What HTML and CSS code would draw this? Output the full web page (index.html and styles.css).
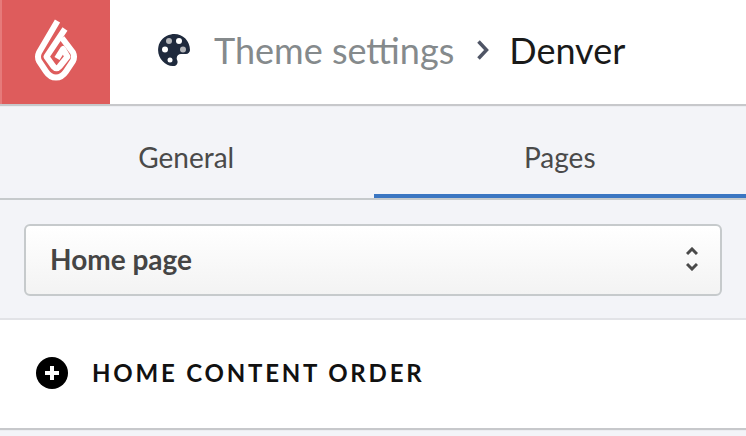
FILE: index.html
```html
<!DOCTYPE html>
<html lang="en">
<head>
    <meta charset="UTF-8">
    <meta name="viewport" content="width=device-width, initial-scale=1.0">
    <title>Theme settings</title>
    <link rel="stylesheet" href="styles.css">
</head>
<body>
    <header class="top-bar">
        <div class="logo-box">
            <svg class="logo" viewBox="0 0 44 64" width="44" height="64" fill="none" stroke="#fff" stroke-width="6" stroke-linejoin="round">
                <path d="M23.500 3 L5 34.500 Q3 38.700 5 43 L12 53.500 Q16 59.500 22 59.500 Q28 59.500 32 53.500 L39 43 Q41 38.700 39 34.500 L28 20"/>
                <path d="M31 11 L12.500 38.700 L19.500 48.500 Q22.500 52 25.500 48.500 L33.500 38.700 L29 31 L23 40.500"/>
            </svg>
        </div>
        <nav class="crumbs">
            <svg class="palette" viewBox="0 0 32 32" width="32" height="32">
                <path fill="#1f2a3d" d="M13 .4C6.500 1.500 1.500 6.500.4 12.700-1.900 24.400 8.600 33.100 16.500 31.900c2.600-.4 3.800-3.400 2.700-5.700-1.500-2.800.6-6.100 3.800-6.100h5c2.200 0 4-1.900 4-4.100C32 6 23.200-1.600 13 .4z"/>
                <circle cx="11" cy="7" r="3" fill="#b4b6ba"/>
                <circle cx="21" cy="7" r="3" fill="#fff"/>
                <circle cx="7" cy="15.500" r="3" fill="#fff"/>
                <circle cx="25" cy="15.500" r="3" fill="#b4b6ba"/>
                <circle cx="12" cy="26" r="2.500" fill="#fff"/>
            </svg>
            <span class="crumb-parent">Theme settings</span>
            <svg class="crumb-arrow" viewBox="0 0 12 20" width="12" height="20" fill="none" stroke="#4f5565" stroke-width="3.500">
                <path d="M1.500 1.500 L9.500 10 L1.500 18.500"/>
            </svg>
            <span class="crumb-current">Denver</span>
        </nav>
    </header>

    <div class="tabs">
        <a class="tab">General</a>
        <a class="tab active">Pages</a>
    </div>

    <div class="select-row">
        <div class="select-box">
            <span>Home page</span>
            <svg class="updown" viewBox="0 0 12 24" width="12" height="24" fill="none" stroke="#4a4a4a" stroke-width="3">
                <path d="M1 7 L6 2 L11 7"/>
                <path d="M1 17 L6 22 L11 17"/>
            </svg>
        </div>
    </div>

    <section class="section-row">
        <svg class="plus" viewBox="0 0 32 32" width="32" height="32">
            <circle cx="16" cy="16" r="16" fill="#000"/>
            <path d="M16 9 V23 M9 16 H23" stroke="#fff" stroke-width="4"/>
        </svg>
        <h2>HOME CONTENT ORDER</h2>
    </section>
</body>
</html>
```

FILE: styles.css
```css
body {
    font-family: Lato, "Liberation Sans", sans-serif;
    margin: 0;
    height: 436px;
    overflow: hidden;
    background: #f3f4f8;
}

.top-bar {
    display: flex;
    height: 104px;
    background: #fff;
    box-shadow: 0 2px 1px rgba(0, 0, 0, 0.18);
}

.logo-box {
    width: 110px;
    display: flex;
    align-items: center;
    justify-content: center;
    background: #de5c5c;
    border-left: 2px solid #e67a7a;
    box-sizing: border-box;
}

.logo {
    margin-bottom: 4px;
}

.crumbs {
    display: flex;
    align-items: center;
    padding: 0 0 4px 48px;
    font-size: 36px;
}

.palette {
    margin-right: 24px;
}

.crumb-parent {
    color: #858a8c;
}

.crumb-arrow {
    margin: 0 20px 0 23px;
}

.crumb-current {
    color: #1a1a1a;
}

.tabs {
    display: flex;
    height: 96px;
    border-bottom: 2px solid #c6cacc;
    box-sizing: border-box;
}

.tab {
    flex: 1;
    display: flex;
    align-items: center;
    justify-content: center;
    font-size: 28px;
    color: #4a4a4a;
    padding-top: 16px;
    border-bottom: 4px solid transparent;
    box-sizing: border-box;
}

.tab.active {
    border-bottom-color: #3b76c2;
    margin-left: 1px;
}

.select-row {
    padding: 24px 24px 22px;
    border-bottom: 2px solid #e2e3e7;
}

.select-box {
    display: flex;
    align-items: center;
    justify-content: space-between;
    height: 72px;
    padding: 0 22px 2px 24px;
    font-size: 28px;
    font-weight: bold;
    color: #454545;
    background: linear-gradient(#fff, #f3f3f3);
    border: 2px solid #c6cacc;
    border-radius: 6px;
    box-sizing: border-box;
}

.section-row {
    display: flex;
    align-items: center;
    height: 108px;
    padding: 0 0 3px 36px;
    background: #fff;
    box-shadow: 0 2px 1px rgba(0, 0, 0, 0.18);
    box-sizing: border-box;
}

.plus {
    margin-right: 24px;
}

h2 {
    margin: 0;
    font-size: 24px;
    font-weight: bold;
    letter-spacing: 2.800px;
    color: #111;
}
```
